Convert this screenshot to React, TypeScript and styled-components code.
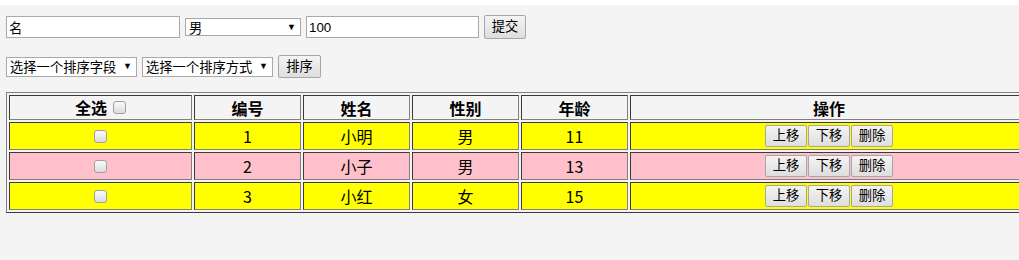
import React from "react";
import styled, { createGlobalStyle } from "styled-components";

const GlobalStyle = createGlobalStyle`
  html, body {
    margin: 0;
    padding: 0;
    background: #ffffff;
    overflow: hidden;
  }
  body {
    font-family: "Liberation Sans", "Noto Sans CJK SC", sans-serif;
  }
`;

const Page = styled.div`
  margin-top: 5px;
  background: #f4f4f4;
  min-height: 255px;
  padding: 10px 6px 0 6px;
  width: 1100px;
`;

const Bar = styled.div<{ $gap: number; $mb: number }>`
  display: flex;
  align-items: center;
  gap: ${(p) => p.$gap}px;
  margin-bottom: ${(p) => p.$mb}px;
`;

const TextInput = styled.input<{ $w: number }>`
  box-sizing: border-box;
  width: ${(p) => p.$w}px;
  height: 22px;
  margin: 0;
  padding: 1px 2px;
  border: 1px solid #a9a9a9;
  background: #ffffff;
  font-family: "Liberation Sans", "Noto Sans CJK SC", sans-serif;
  font-size: 13.3px;
  color: #000;
  outline: none;
`;

const SelectBox = styled.div<{ $w: number; $h: number }>`
  box-sizing: border-box;
  width: ${(p) => p.$w}px;
  height: ${(p) => p.$h}px;
  border: 1px solid #a9a9a9;
  background: #ffffff;
  display: flex;
  align-items: center;
  justify-content: space-between;
  padding: 0 4px 0 3px;
  font-size: 13.3px;
  color: #000;
  white-space: nowrap;
  overflow: hidden;
`;

const Arrow = styled.span`
  font-size: 9px;
  line-height: 1;
  margin-left: 4px;
`;

const Btn = styled.button<{ $w: number; $h: number }>`
  box-sizing: border-box;
  width: ${(p) => p.$w}px;
  height: ${(p) => p.$h}px;
  margin: 0;
  padding: 0;
  border: 1px solid #a6a6a6;
  border-radius: 2px;
  background: linear-gradient(#f4f4f4, #dedede);
  font-family: "Liberation Sans", "Noto Sans CJK SC", sans-serif;
  font-size: 13.3px;
  color: #000;
  line-height: 1;
`;

const Table = styled.table`
  width: 1025px;
  table-layout: fixed;
  border-collapse: separate;
  border-spacing: 2px;
  border: 1px solid;
  border-color: #808080 #3a3a3a #3a3a3a #808080;
  font-family: "Noto Sans CJK SC", "Liberation Sans", sans-serif;
  font-size: 16px;
  line-height: 1;
`;

const Col = styled.col<{ $w: number }>`
  width: ${(p) => p.$w}px;
`;

const Cell = styled.td<{ $bg?: string }>`
  border: 1px solid;
  border-color: #3a3a3a #808080 #808080 #3a3a3a;
  background: ${(p) => p.$bg || "transparent"};
  text-align: center;
  vertical-align: middle;
  padding: 0;
  height: 28px;
  box-sizing: border-box;
  color: #000;
`;

const Head = styled.th`
  border: 1px solid;
  border-color: #3a3a3a #808080 #808080 #3a3a3a;
  text-align: center;
  vertical-align: middle;
  padding: 0;
  height: 25px;
  box-sizing: border-box;
  font-weight: bold;
`;

const Check = styled.span<{ $ml?: number }>`
  display: inline-block;
  box-sizing: border-box;
  width: 13px;
  height: 13px;
  margin-left: ${(p) => p.$ml || 0}px;
  border: 1px solid #a0a0a0;
  border-radius: 3px;
  background: linear-gradient(#fafafa, #dcdcdc);
  vertical-align: middle;
  position: relative;
  top: -2px;
`;

const Ops = styled.div`
  display: flex;
  justify-content: center;
  gap: 1px;
`;

const rows = [
  { id: 1, name: "小明", sex: "男", age: 11, bg: "#ffff00" },
  { id: 2, name: "小子", sex: "男", age: 13, bg: "#ffc0cb" },
  { id: 3, name: "小红", sex: "女", age: 15, bg: "#ffff00" },
];

export default function App() {
  return (
    <>
      <GlobalStyle />
      <Page>
        <Bar $gap={5} $mb={16}>
          <TextInput $w={174} defaultValue="名" />
          <SelectBox $w={116} $h={18}>
            <span>男</span>
            <Arrow>▼</Arrow>
          </SelectBox>
          <TextInput $w={173} defaultValue="100" />
          <Btn $w={42} $h={24}>提交</Btn>
        </Bar>
        <Bar $gap={5} $mb={14}>
          <SelectBox $w={131} $h={20}>
            <span>选择一个排序字段</span>
            <Arrow>▼</Arrow>
          </SelectBox>
          <SelectBox $w={131} $h={20}>
            <span>选择一个排序方式</span>
            <Arrow>▼</Arrow>
          </SelectBox>
          <Btn $w={43} $h={23}>排序</Btn>
        </Bar>
        <Table>
          <colgroup>
            <Col $w={183} />
            <Col $w={107} />
            <Col $w={107} />
            <Col $w={107} />
            <Col $w={107} />
            <col />
          </colgroup>
          <thead>
            <tr>
              <Head>
                全选<Check $ml={6} />
              </Head>
              <Head>编号</Head>
              <Head>姓名</Head>
              <Head>性别</Head>
              <Head>年龄</Head>
              <Head>操作</Head>
            </tr>
          </thead>
          <tbody>
            {rows.map((r) => (
              <tr key={r.id}>
                <Cell $bg={r.bg}>
                  <Check />
                </Cell>
                <Cell $bg={r.bg}>{r.id}</Cell>
                <Cell $bg={r.bg}>{r.name}</Cell>
                <Cell $bg={r.bg}>{r.sex}</Cell>
                <Cell $bg={r.bg}>{r.age}</Cell>
                <Cell $bg={r.bg}>
                  <Ops>
                    <Btn $w={42} $h={22}>上移</Btn>
                    <Btn $w={42} $h={22}>下移</Btn>
                    <Btn $w={42} $h={22}>删除</Btn>
                  </Ops>
                </Cell>
              </tr>
            ))}
          </tbody>
        </Table>
      </Page>
    </>
  );
}
